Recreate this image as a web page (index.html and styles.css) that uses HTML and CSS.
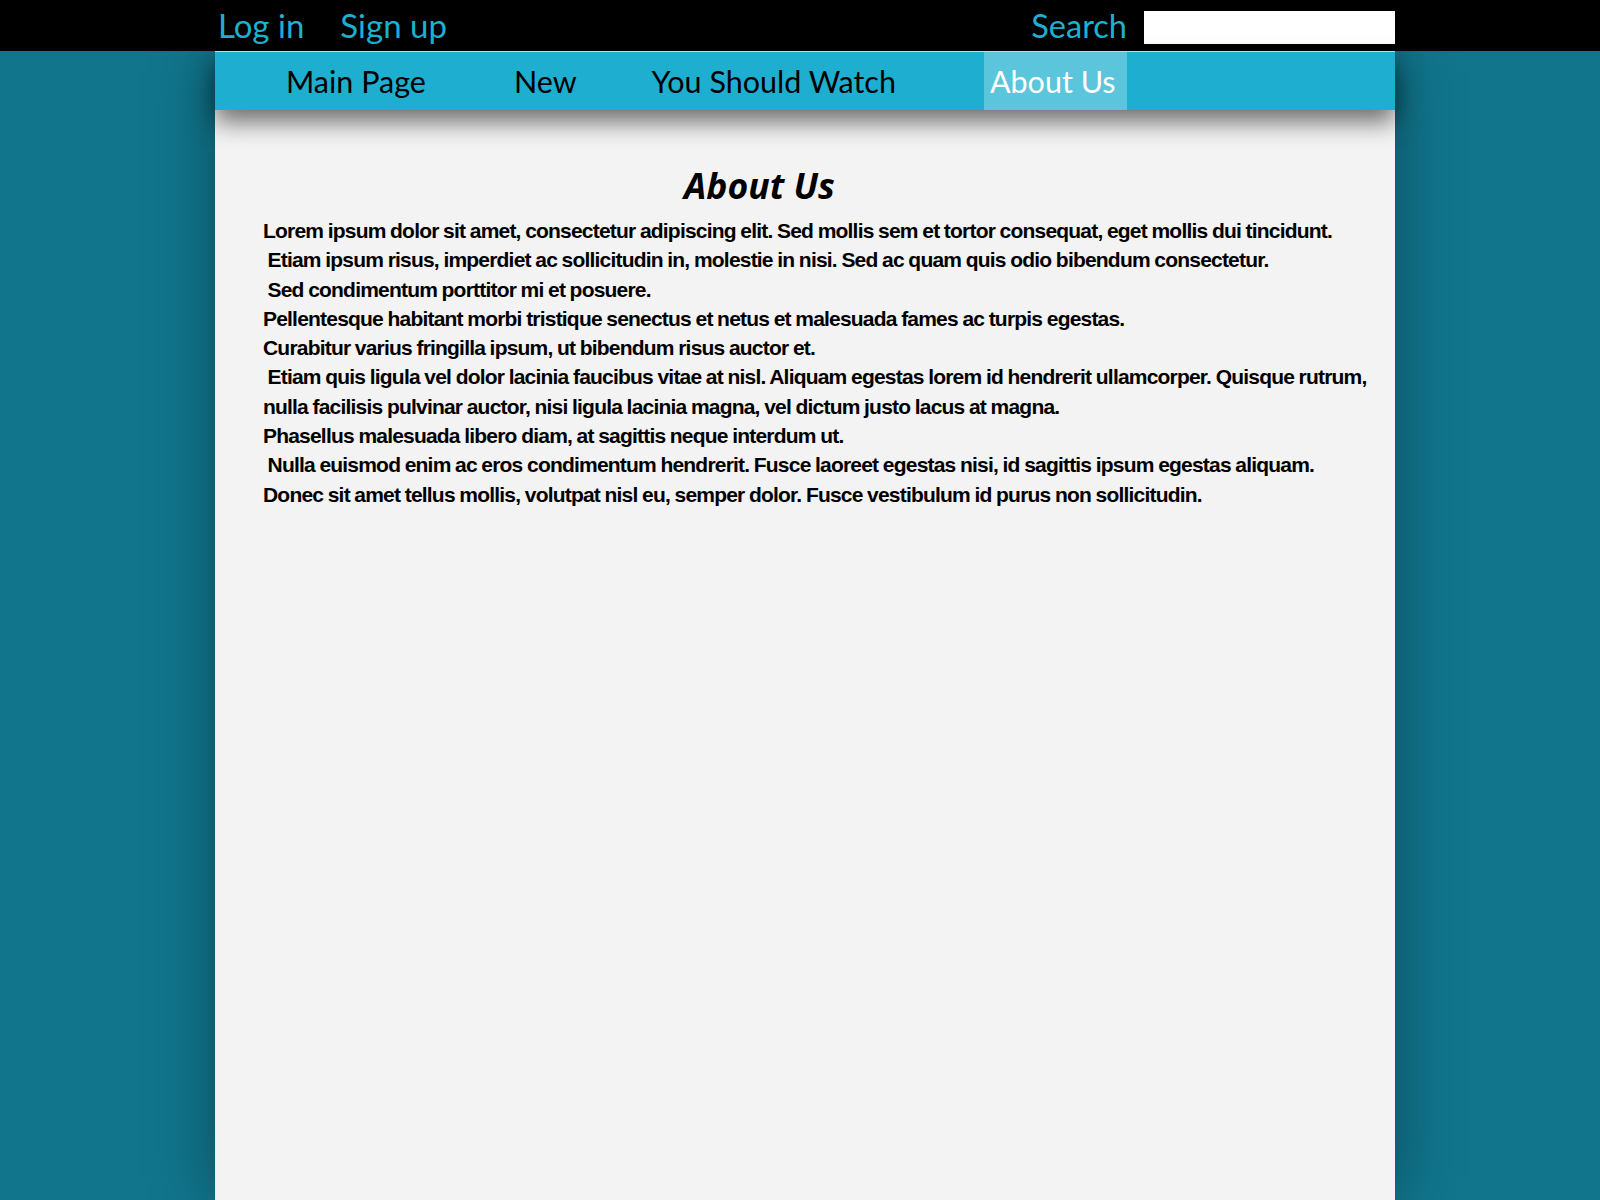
FILE: index.html
```html
<!DOCTYPE html>
<html>
<head>
<meta charset="utf-8">
<title>About Us</title>
<link rel="stylesheet" href="styles.css">
</head>
<body>
<header class="topbar">
  <div class="topbar-inner">
    <div class="account">
      <a class="top-link" href="#">Log in</a>
      <a class="top-link" href="#">Sign up</a>
    </div>
    <form class="search">
      <label class="top-link search-label" for="q">Search</label>
      <input class="search-input" id="q" type="text">
    </form>
  </div>
</header>
<div class="page">
  <nav class="mainnav">
    <a class="nav-item nav-main" href="#">Main Page</a>
    <a class="nav-item nav-new" href="#">New</a>
    <a class="nav-item nav-watch" href="#">You Should Watch</a>
    <a class="nav-item nav-about active" href="#">About Us</a>
  </nav>
  <main class="content">
    <h1 class="title">About Us</h1>
    <p class="text">Lorem ipsum dolor sit amet, consectetur adipiscing elit. Sed mollis sem et tortor consequat, eget mollis dui tincidunt.<br>&nbsp;Etiam ipsum risus, imperdiet ac sollicitudin in, molestie in nisi. Sed ac quam quis odio bibendum consectetur.<br>&nbsp;Sed condimentum porttitor mi et posuere.<br>Pellentesque habitant morbi tristique senectus et netus et malesuada fames ac turpis egestas.<br>Curabitur varius fringilla ipsum, ut bibendum risus auctor et.<br>&nbsp;Etiam quis ligula vel dolor lacinia faucibus vitae at nisl. Aliquam egestas lorem id hendrerit ullamcorper. Quisque rutrum, nulla facilisis pulvinar auctor, nisi ligula lacinia magna, vel dictum justo lacus at magna.<br>Phasellus malesuada libero diam, at sagittis neque interdum ut.<br>&nbsp;Nulla euismod enim ac eros condimentum hendrerit. Fusce laoreet egestas nisi, id sagittis ipsum egestas aliquam.<br>Donec sit amet tellus mollis, volutpat nisl eu, semper dolor. Fusce vestibulum id purus non sollicitudin.</p>
  </main>
</div>
</body>
</html>
```

FILE: styles.css
```css
html, body {
  margin: 0;
  padding: 0;
  height: 100%;
}
body {
  background: #11758c;
  font-family: Lato, "Open Sans", sans-serif;
  overflow: hidden;
}
.topbar {
  background: #000;
  height: 51px;
}
.topbar-inner {
  width: 1180px;
  margin-left: calc(50% - 585px);
  height: 51px;
  display: flex;
  justify-content: space-between;
  align-items: center;
}
.account {
  display: flex;
  gap: 36px;
  padding-left: 3px;
}
.top-link {
  color: #1eb0d0;
  text-decoration: none;
  font-size: 33px;
  line-height: 51px;
}
.search-label {
  font-size: 32.5px;
}
.search {
  display: flex;
  align-items: center;
  gap: 17px;
  margin: 0;
}
.search-input {
  width: 251px;
  height: 33px;
  box-sizing: border-box;
  border: none;
  background: #fff;
  margin: 4px 0 0;
  padding: 0 4px;
}
.page {
  width: 1180px;
  margin-left: calc(50% - 585px);
  min-height: calc(100% - 51px);
  background: #f3f3f3;
  box-shadow: 0 0 60px rgba(0, 0, 0, 0.35);
}
.mainnav {
  display: flex;
  height: 59px;
  background: #1eafd0;
  border-top: 1px solid #b9dde6;
  box-sizing: border-box;
  box-shadow: 0 12px 24px rgba(0, 0, 0, 0.55);
  position: relative;
  padding-left: 65px;
}
.nav-item {
  display: block;
  color: #000;
  text-decoration: none;
  font-size: 30.5px;
  line-height: 58px;
  padding: 0 6px;
}
.nav-new { margin-left: 76px; }
.nav-watch { margin-left: 63px; }
.nav-about { margin-left: 82px; padding-right: 11px; }
.nav-item.active {
  background: #5bc5dc;
  color: #fff;
}
.content {
  padding: 52px 15px 0 48px;
}
.title {
  font-family: "Open Sans", sans-serif;
  font-weight: 700;
  font-style: italic;
  font-size: 35.5px;
  line-height: 46px;
  margin: 0 0 0 421px;
  color: #000;
}
.text {
  font-family: "Liberation Sans Narrow", "Liberation Sans", Arial, sans-serif;
  font-weight: 700;
  font-size: 21px;
  letter-spacing: -0.8px;
  word-spacing: -0.5px;
  line-height: 29.3px;
  margin: 8px 0 0;
  color: #000;
}
```
